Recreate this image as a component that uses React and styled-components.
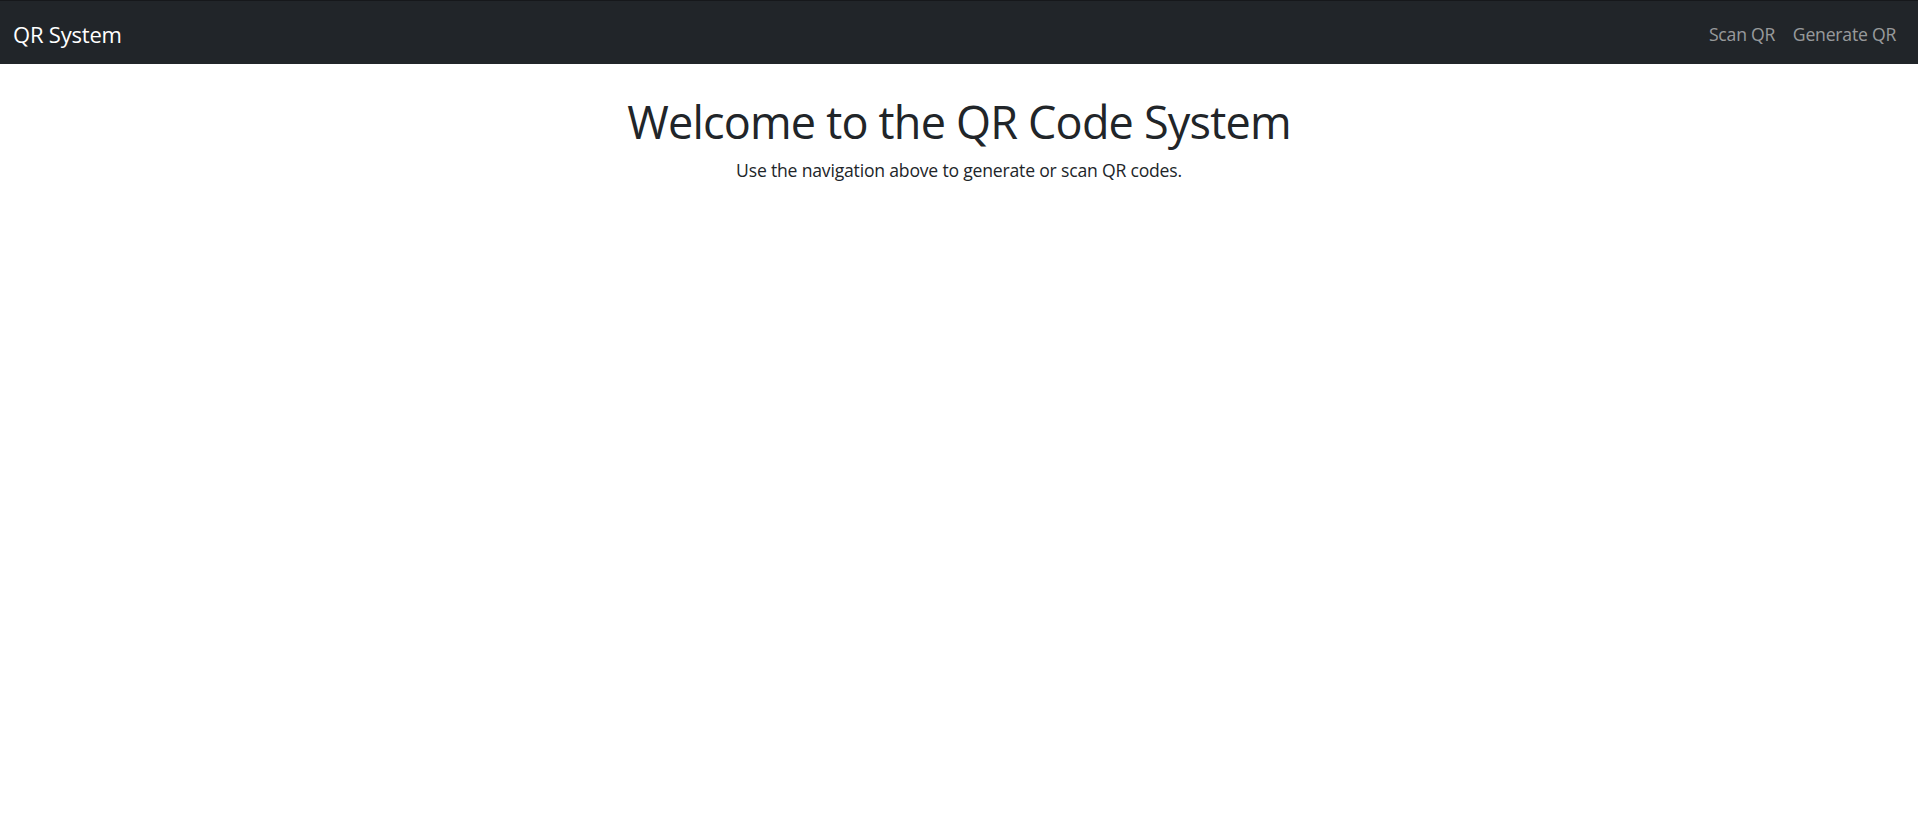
import React from 'react';
import styled, { createGlobalStyle } from 'styled-components';

const GlobalStyle = createGlobalStyle`
  body {
    margin: 0;
    font-family: "Open Sans", "Noto Sans", "Liberation Sans", sans-serif;
    color: #212529;
    background: #fff;
  }
`;

const Navbar = styled.nav`
  display: flex;
  align-items: center;
  justify-content: space-between;
  box-sizing: border-box;
  height: 64px;
  padding: 2px 13px 0;
  background-color: #212529;
  border-top: 1px solid #16181b;
`;

const Brand = styled.a`
  color: #fff;
  font-size: 22px;
  text-decoration: none;
  letter-spacing: -0.2px;
`;

const NavLinks = styled.div`
  display: flex;
`;

const NavLink = styled.a`
  color: rgba(255, 255, 255, 0.55);
  font-size: 17.6px;
  padding: 8px 8.8px;
  text-decoration: none;
  letter-spacing: -0.2px;
`;

const Main = styled.main`
  text-align: center;
  padding-top: 31px;
`;

const Title = styled.h1`
  margin: 0 0 8px;
  font-size: 45px;
  font-weight: 400;
  line-height: 1.2;
  letter-spacing: -0.8px;
`;

const Lead = styled.p`
  margin: 0;
  font-size: 17.6px;
  line-height: 1.5;
  letter-spacing: -0.2px;
`;

export default function App() {
  return (
    <>
      <GlobalStyle />
      <Navbar>
        <Brand href="#">QR System</Brand>
        <NavLinks>
          <NavLink href="#">Scan QR</NavLink>
          <NavLink href="#">Generate QR</NavLink>
        </NavLinks>
      </Navbar>
      <Main>
        <Title>Welcome to the QR Code System</Title>
        <Lead>Use the navigation above to generate or scan QR codes.</Lead>
      </Main>
    </>
  );
}
